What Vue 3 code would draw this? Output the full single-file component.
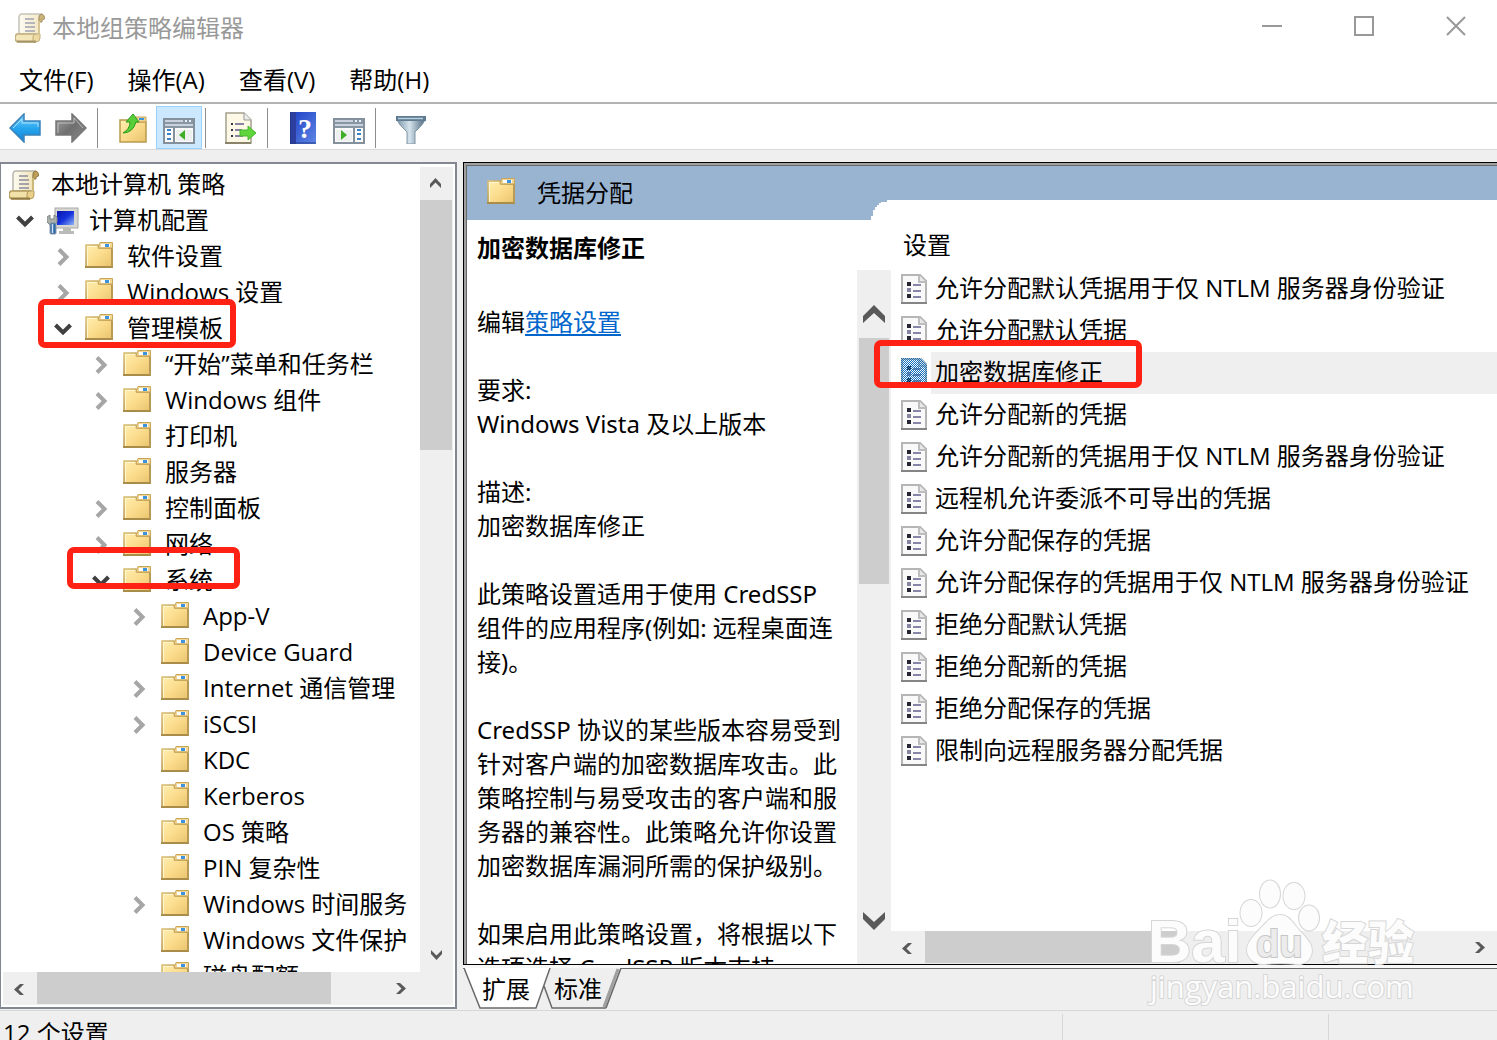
<template>
  <div class="window">
    <svg class="symbols" aria-hidden="true">
      <defs>
        <linearGradient id="gFolder" x1="0" y1="0" x2="1" y2="1">
          <stop offset="0" stop-color="#ffeeb0" />
          <stop offset="0.5" stop-color="#fbdc8c" />
          <stop offset="1" stop-color="#e8c26c" />
        </linearGradient>
        <linearGradient id="gFolderEdge" x1="0" y1="0" x2="1" y2="1">
          <stop offset="0" stop-color="#d9bd72" />
          <stop offset="1" stop-color="#8f7434" />
        </linearGradient>
        <linearGradient id="gPaper" x1="0" y1="0" x2="1" y2="0">
          <stop offset="0" stop-color="#fdfbf2" />
          <stop offset="1" stop-color="#f0e0ae" />
        </linearGradient>
        <linearGradient id="gBack" x1="0" y1="0" x2="0" y2="1">
          <stop offset="0" stop-color="#7fd0fa" />
          <stop offset="0.5" stop-color="#27a7f0" />
          <stop offset="1" stop-color="#1480cf" />
        </linearGradient>
        <linearGradient id="gForward" x1="0" y1="0" x2="1" y2="1">
          <stop offset="0" stop-color="#a5a5a5" />
          <stop offset="0.5" stop-color="#6f6f6f" />
          <stop offset="1" stop-color="#8c8c8c" />
        </linearGradient>
        <linearGradient id="gScreen" x1="0" y1="0" x2="1" y2="1">
          <stop offset="0" stop-color="#0a17a8" />
          <stop offset="0.5" stop-color="#1431dd" />
          <stop offset="1" stop-color="#8fb4f5" />
        </linearGradient>
        <linearGradient id="gHelp" x1="0" y1="0" x2="1" y2="1">
          <stop offset="0" stop-color="#1c3fc4" />
          <stop offset="1" stop-color="#5f86e6" />
        </linearGradient>
        <linearGradient id="gFunnel" x1="0" y1="0" x2="1" y2="0">
          <stop offset="0" stop-color="#7d97a8" />
          <stop offset="0.45" stop-color="#d5e3ec" />
          <stop offset="1" stop-color="#4e6b80" />
        </linearGradient>
        <pattern id="pDither" width="2" height="2" patternUnits="userSpaceOnUse">
          <rect width="1" height="1" fill="#1272c0" />
          <rect x="1" y="1" width="1" height="1" fill="#1272c0" />
        </pattern>
      </defs>

      <symbol id="folder" viewBox="0 0 28 26">
        <path d="M1 3h12l1 3h13v19.500H1z" fill="url(#gFolder)" stroke="url(#gFolderEdge)" stroke-width="1.500" />
        <path d="M2.500 24V4.500H12" fill="none" stroke="#fff6cf" />
        <path d="M13 6l2-5.500h12.500V6z" fill="#f0d796" stroke="#c9a55a" />
        <rect x="16" y="2" width="9" height="3" fill="#fff" />
        <rect x="20" y="2" width="4" height="3" fill="#3b93dd" />
        <path d="M0 25h28" stroke="#a98c4a" stroke-width="2" />
        <path d="M27 7v18" stroke="#b89a55" stroke-width="2" />
      </symbol>

      <symbol id="scroll" viewBox="0 0 30 30">
        <path d="M7 1q-3 0-3 4v16H24V5q0-4 3-4z" fill="url(#gPaper)" stroke="#b8b5a8" stroke-width="1.500" />
        <path d="M24 9V5q0-4 3-4 3 1 2.500 5L27 7v2z" fill="#bfa05a" stroke="#93793f" />
        <path d="M2 21h18v8H3q-3-1-3-4 0-3 2-4z" fill="#f1e0a8" stroke="#b39b5e" stroke-width="1.500" />
        <path d="M18 29V24q0-3 3-3h4v4q0 4-4 4z" fill="#e9d08a" stroke="#b39b5e" />
        <path d="M24 8v14" stroke="#cdb87c" stroke-width="2" />
        <path d="M2 28.500h19" stroke="#8f7a45" stroke-width="2" />
        <path d="M10 6h9M10 10h10M10 14h10M10 18h10" stroke="#8b8ca0" stroke-width="1.500" />
      </symbol>

      <symbol id="computer" viewBox="0 0 32 28">
        <rect x="8" y="1" width="23" height="20" fill="#d6d6d2" stroke="#a9a9a5" />
        <rect x="10" y="4" width="17" height="14" fill="url(#gScreen)" />
        <path d="M16 21h8v3h3v3H12v-3h4z" fill="#b9bbb8" />
        <path d="M0 10l3-2v4h4V8l3 2v5l-2 3H3l-3-3z" fill="#a9b0a8" stroke="#80858c" />
        <rect x="3" y="16" width="6" height="11" rx="1" fill="#2f6aa8" stroke="#8b99a8" />
        <path d="M5.500 17v9" stroke="#cfe3f5" stroke-width="1.500" />
      </symbol>

      <symbol id="policy" viewBox="0 0 26 30">
        <path d="M1 1h18l6 6v22H1z" fill="#f9f9f9" stroke="#b5b5b5" stroke-width="2" />
        <path d="M18 1v7h7" fill="#e8e8e8" stroke="#bdbdbd" stroke-width="2" />
        <path d="M0 29h26" stroke="#858585" stroke-width="2" />
        <path d="M6 8h4v4H6zM6 20h4v4H6z" fill="#262633" />
        <path d="M6 14h4v4H6z" fill="#8686a3" />
        <path d="M12 11h8M12 17h8M12 23h8" stroke="#8886a6" stroke-width="2" />
      </symbol>

      <symbol id="back" viewBox="0 0 32 30">
        <path d="M1 15L15 1v7h16v14H15v7z" fill="url(#gBack)" stroke="#3c82b8" stroke-width="1.500" />
        <path d="M4 15l9-9v4h16v4" fill="none" stroke="#a9e2ff" />
      </symbol>
      <symbol id="forward" viewBox="0 0 32 30">
        <path d="M31 15L17 1v7H1v14h16v7z" fill="url(#gForward)" stroke="#777" stroke-width="1.500" />
        <path d="M28 15l-9-10v5H3v10" fill="none" stroke="#bdbdbd" />
      </symbol>

      <symbol id="up" viewBox="0 0 28 30">
        <path d="M1 7h12l1 2h13v20H1z" fill="url(#gFolder)" stroke="#b9994e" stroke-width="1.500" />
        <path d="M14 9l2-5h11v5z" fill="#eed38f" stroke="#c9a55a" />
        <rect x="20" y="5" width="5" height="2" fill="#3b93dd" />
        <path d="M14 1l-7 8h4q0 7-7 11 10 0 13-11h3z" fill="#58cf39" stroke="#2d9c1e" />
      </symbol>

      <symbol id="console" viewBox="0 0 32 26">
        <rect x="1" y="1" width="30" height="24" fill="#fafafa" stroke="#84909c" stroke-width="2" />
        <path d="M2 2h28v8H2z" fill="#8997a5" />
        <path d="M2 3h18M2 7h28" stroke="#e0e8ef" stroke-width="1.500" />
        <path d="M22 3h2M26 3h2" stroke="#eaf2fa" stroke-width="2" />
        <path d="M11 10v15" stroke="#84909c" stroke-width="2" />
        <path d="M4 12h4M4 16h4M4 21h4" stroke="#3e82c4" stroke-width="2" />
        <rect x="13" y="12" width="16" height="11" fill="#eef0ef" />
        <path d="M22 12v10l-6-5z" fill="#3fae27" />
      </symbol>
      <symbol id="actions" viewBox="0 0 32 26">
        <rect x="1" y="1" width="30" height="24" fill="#fafafa" stroke="#84909c" stroke-width="2" />
        <path d="M2 2h28v8H2z" fill="#8997a5" />
        <path d="M2 3h18M2 7h28" stroke="#e0e8ef" stroke-width="1.500" />
        <path d="M22 3h2M26 3h2" stroke="#eaf2fa" stroke-width="2" />
        <path d="M21 10v15" stroke="#84909c" stroke-width="2" />
        <path d="M24 12h4M24 16h4M24 21h4" stroke="#3e82c4" stroke-width="2" />
        <rect x="3" y="12" width="16" height="11" fill="#eef0ef" />
        <path d="M8 12v10l6-5z" fill="#3fae27" />
      </symbol>

      <symbol id="export" viewBox="0 0 32 32">
        <path d="M1 1h18l7 7v23H1z" fill="#fdf9e6" stroke="#a3a08f" stroke-width="1.500" />
        <path d="M19 1v7h7" fill="#eee" stroke="#999" />
        <path d="M0 31h26" stroke="#8a836a" stroke-width="2" />
        <path d="M6 12h2M6 18h2M6 24h2" stroke="#33334a" stroke-width="2" />
        <path d="M10 12h9M10 18h7M10 24h8" stroke="#8684a2" stroke-width="2" />
        <path d="M15 18h8v-4l8 7-8 7v-4h-8z" fill="#5fd63b" stroke="#48b530" />
      </symbol>

      <symbol id="help" viewBox="0 0 26 32">
        <rect width="26" height="32" fill="url(#gHelp)" />
        <rect width="6" height="32" fill="#2c3f9f" />
        <path d="M.5 0v32M0 31h26" stroke="#243a86" />
        <text x="8" y="26" class="mark">?</text>
      </symbol>

      <symbol id="filter" viewBox="0 0 30 28">
        <path d="M1 4q2 5 10 12v12h8V16q8-7 10-12z" fill="url(#gFunnel)" stroke="#8297a5" />
        <path d="M0 0h30v5H0z" fill="#5f7b90" />
        <path d="M2 2.500h25" stroke="#b5cfe0" stroke-width="1.500" />
      </symbol>

      <symbol id="chevron" viewBox="0 0 20 20">
        <path d="M6 2.500l7.500 7.500L6 17.500" fill="none" stroke="currentColor" stroke-width="4" />
      </symbol>
      <symbol id="arrow" viewBox="0 0 20 20">
        <path d="M5 4h4l6 5.500L9 15H5l5.500-5.500z" fill="currentColor" />
      </symbol>
      <symbol id="arrowBig" viewBox="0 0 22 18">
        <path d="M0 11L11 0l11 11v7L11 8 0 18z" fill="currentColor" />
      </symbol>
    </svg>

    <header class="titlebar">
      <svg class="app-icon"><use href="#scroll" /></svg>
      <h1>本地组策略编辑器</h1>
      <div class="controls">
        <button aria-label="最小化"><svg viewBox="0 0 20 20"><path d="M0 10h20" /></svg></button>
        <button aria-label="最大化"><svg viewBox="0 0 20 20"><path d="M1 1h18v18H1z" /></svg></button>
        <button aria-label="关闭"><svg viewBox="0 0 20 20"><path d="M1 1l18 18M19 1L1 19" /></svg></button>
      </div>
    </header>

    <nav class="menubar">
      <button v-for="item in menus" :key="item">{{ item }}</button>
    </nav>

    <div class="toolbar">
      <template v-for="(tool, i) in tools" :key="i">
        <span v-if="tool.sep" class="sep"></span>
        <button v-else :class="{ active: tool.active }" :aria-label="tool.label">
          <svg :class="'t-' + tool.icon"><use :href="'#' + tool.icon" /></svg>
        </button>
      </template>
    </div>

    <main class="panes">
      <section class="tree-pane">
        <div class="tree-body">
          <ul class="tree">
            <li v-for="node in nodes" :key="node.text" :style="{ paddingLeft: indent(node) + 'px' }">
              <span v-if="node.level > 0" class="slot">
                <button
                  v-if="node.state"
                  class="toggle"
                  :class="{ open: node.state === 'open' }"
                  :aria-label="node.text"
                >
                  <svg><use href="#chevron" /></svg>
                </button>
              </span>
              <span class="node-icon">
                <svg :class="'n-' + (node.icon || 'folder')"><use :href="'#' + (node.icon || 'folder')" /></svg>
              </span>
              <span class="node-text">{{ node.text }}</span>
            </li>
          </ul>
          <div class="vbar">
            <button aria-label="向上"><svg class="up"><use href="#arrow" /></svg></button>
            <div class="thumb"></div>
            <button class="end" aria-label="向下"><svg class="down"><use href="#arrow" /></svg></button>
          </div>
        </div>
        <div class="hbar">
          <button aria-label="向左"><svg class="left"><use href="#arrow" /></svg></button>
          <div class="thumb"></div>
          <button class="end" aria-label="向右"><svg><use href="#arrow" /></svg></button>
        </div>
        <div class="marker marker-templates"></div>
        <div class="marker marker-system"></div>
      </section>

      <section class="result-pane">
        <div class="result-frame">
          <div class="banner">
            <svg class="n-folder"><use href="#folder" /></svg>
            <h2>凭据分配</h2>
          </div>
          <div class="columns">
            <article class="detail">
              <h3>加密数据库修正</h3>
              <p class="edit">编辑<a href="#">策略设置</a></p>
              <p v-for="(para, i) in paragraphs" :key="i">
                <span v-for="line in para" :key="line">{{ line }}</span>
              </p>
            </article>
            <div class="bigbar">
              <button aria-label="向上"><svg><use href="#arrowBig" /></svg></button>
              <div class="thumb"></div>
              <button class="end" aria-label="向下"><svg class="flip"><use href="#arrowBig" /></svg></button>
            </div>
            <div class="list">
              <svg class="corner" viewBox="0 0 20 20"><path d="M0 20V16H2V10H4V7H6V5H8V3H10V2H16V0H20V20z" /></svg>
              <h3>设置</h3>
              <ul>
                <li v-for="s in settings" :key="s" :class="{ selected: s === current }">
                  <svg class="doc" viewBox="0 0 26 30">
                    <use href="#policy" />
                    <path v-if="s === current" d="M0 0h20l6 6v24H0z" fill="url(#pDither)" />
                  </svg>
                  <span>{{ s }}</span>
                </li>
              </ul>
              <div class="hbar list-hbar">
                <button aria-label="向左"><svg class="left"><use href="#arrow" /></svg></button>
                <div class="thumb"></div>
                <button class="end" aria-label="向右"><svg><use href="#arrow" /></svg></button>
              </div>
              <div class="marker marker-setting"></div>
            </div>
          </div>
        </div>
        <div class="tabs">
          <svg viewBox="0 0 160 44">
            <path d="M80 18l8 22h54l15-40H86z" fill="#efefef" />
            <path d="M80 18l8 22h54" fill="none" stroke="#696969" stroke-width="1.500" />
            <path d="M154 1l-14 38" fill="none" stroke="#a0a0a0" stroke-width="3" />
            <path d="M157 0l-15 40" fill="none" stroke="#696969" stroke-width="1.500" />
            <path d="M0 0l16 40h56L86 0z" fill="#fff" />
            <path d="M0 0l16 40h56L86 0" fill="none" stroke="#696969" stroke-width="1.500" />
          </svg>
          <button>扩展</button>
          <button>标准</button>
        </div>
      </section>
    </main>

    <footer class="status">
      <div class="status-text">12 个设置</div>
      <div class="cell wide"></div>
      <div class="cell"></div>
    </footer>

    <svg class="watermark" viewBox="0 0 280 130">
      <g class="wm-shape">
        <ellipse cx="101" cy="33" rx="10.500" ry="13" />
        <ellipse cx="120" cy="14" rx="10" ry="13.500" />
        <ellipse cx="144" cy="16" rx="10.500" ry="13" />
        <ellipse cx="159" cy="38" rx="10" ry="12.500" />
        <path d="M130 35c9 0 13 8 19 15 7 8 13 13 13 21-1 9-7 14-16 13-7-1-23-1-31 0-10 1-17-5-18-13 0-9 6-14 12-21 7-7 12-15 21-15z" />
      </g>
      <text x="-2" y="82" class="wm-bai">Bai</text>
      <text x="106" y="77" class="wm-du">du</text>
      <text x="172" y="79" class="wm-cn">经验</text>
      <text x="0" y="118" class="wm-url">jingyan.baidu.com</text>
    </svg>
  </div>
</template>

<script setup>
import { ref } from 'vue';

const menus = ['文件(F)', '操作(A)', '查看(V)', '帮助(H)'];

const tools = [
  { icon: 'back', label: '后退' },
  { icon: 'forward', label: '前进' },
  { sep: true },
  { icon: 'up', label: '上移一级' },
  { icon: 'console', label: '显示/隐藏控制台树', active: true },
  { sep: true },
  { icon: 'export', label: '导出列表' },
  { sep: true },
  { icon: 'help', label: '帮助' },
  { icon: 'actions', label: '显示/隐藏操作窗格' },
  { sep: true },
  { icon: 'filter', label: '筛选器' }
];

const nodes = [
  { text: '本地计算机 策略', level: 0, icon: 'scroll' },
  { text: '计算机配置', level: 1, icon: 'computer', state: 'open' },
  { text: '软件设置', level: 2, state: 'closed' },
  { text: 'Windows 设置', level: 2, state: 'closed' },
  { text: '管理模板', level: 2, state: 'open' },
  { text: '“开始”菜单和任务栏', level: 3, state: 'closed' },
  { text: 'Windows 组件', level: 3, state: 'closed' },
  { text: '打印机', level: 3 },
  { text: '服务器', level: 3 },
  { text: '控制面板', level: 3, state: 'closed' },
  { text: '网络', level: 3, state: 'closed' },
  { text: '系统', level: 3, state: 'open' },
  { text: 'App-V', level: 4, state: 'closed' },
  { text: 'Device Guard', level: 4 },
  { text: 'Internet 通信管理', level: 4, state: 'closed' },
  { text: 'iSCSI', level: 4, state: 'closed' },
  { text: 'KDC', level: 4 },
  { text: 'Kerberos', level: 4 },
  { text: 'OS 策略', level: 4 },
  { text: 'PIN 复杂性', level: 4 },
  { text: 'Windows 时间服务', level: 4, state: 'closed' },
  { text: 'Windows 文件保护', level: 4 },
  { text: '磁盘配额', level: 4 }
];

const indent = (node) => 5 + Math.max(node.level - 1, 0) * 38;

const paragraphs = [
  ['要求:', 'Windows Vista 及以上版本'],
  ['描述:', '加密数据库修正'],
  ['此策略设置适用于使用 CredSSP', '组件的应用程序(例如: 远程桌面连', '接)。'],
  [
    'CredSSP 协议的某些版本容易受到',
    '针对客户端的加密数据库攻击。此',
    '策略控制与易受攻击的客户端和服',
    '务器的兼容性。此策略允许你设置',
    '加密数据库漏洞所需的保护级别。'
  ],
  ['如果启用此策略设置，将根据以下', '选项选择 CredSSP 版本支持:']
];

const settings = [
  '允许分配默认凭据用于仅 NTLM 服务器身份验证',
  '允许分配默认凭据',
  '加密数据库修正',
  '允许分配新的凭据',
  '允许分配新的凭据用于仅 NTLM 服务器身份验证',
  '远程机允许委派不可导出的凭据',
  '允许分配保存的凭据',
  '允许分配保存的凭据用于仅 NTLM 服务器身份验证',
  '拒绝分配默认凭据',
  '拒绝分配新的凭据',
  '拒绝分配保存的凭据',
  '限制向远程服务器分配凭据'
];

const current = ref('加密数据库修正');
</script>

<style>
body {
  overflow: hidden;
}
</style>

<style scoped>
.window {
  position: relative;
  display: flex;
  flex-direction: column;
  height: 100vh;
  overflow: hidden;
  background: #efefef;
  color: #000;
  font-family: "Open Sans", "Noto Sans CJK SC", sans-serif;
  font-size: 24px;
  line-height: 36px;
  white-space: nowrap;
}

.symbols {
  position: absolute;
  width: 0;
  height: 0;
}

.mark {
  font: bold 28px "Liberation Serif", serif;
  fill: #fff;
}

h1,
h2,
h3,
p,
ul {
  margin: 0;
  padding: 0;
  font-size: 24px;
  font-weight: normal;
  list-style: none;
}

button {
  display: flex;
  align-items: center;
  justify-content: center;
  box-sizing: border-box;
  margin: 0;
  padding: 0;
  border: 0;
  background: none;
  color: inherit;
  font: inherit;
}

svg {
  flex: none;
}

/* title, menu, toolbar */
.titlebar {
  display: flex;
  flex: none;
  align-items: center;
  height: 56px;
  padding-left: 15px;
  background: #fff;
}

.app-icon {
  width: 30px;
  height: 30px;
  opacity: 0.8;
}

.titlebar h1 {
  margin-left: 7px;
  color: #999;
}

.controls {
  display: flex;
  margin-left: auto;
  margin-right: -5px;
}

.controls button {
  width: 92px;
  height: 56px;
  padding-bottom: 4px;
}

.controls svg {
  width: 20px;
  height: 20px;
  overflow: visible;
  fill: none;
  stroke: #999;
  stroke-width: 2;
}

.menubar {
  display: flex;
  flex: none;
  height: 46px;
  padding-left: 2px;
  border-bottom: 2px solid #b2b2b2;
  background: #fff;
}

.menubar button {
  height: 48px;
  padding: 0 17px;
}

.toolbar {
  display: flex;
  flex: none;
  align-items: center;
  height: 45px;
  padding-left: 2px;
  border-bottom: 1px solid #d9d9d9;
  background: #fff;
}

.toolbar button {
  width: 46px;
  height: 43px;
  margin-top: 2px;
}

.toolbar button.active {
  border: 1px solid #99d1ff;
  background: #cce8ff;
}

.sep {
  width: 1px;
  height: 40px;
  margin: 3px 12px 0 3px;
  background: #8d8d8d;
}

.t-back,
.t-forward {
  width: 32px;
  height: 30px;
}

.t-up {
  width: 28px;
  height: 30px;
}

.t-console,
.t-actions {
  width: 32px;
  height: 26px;
  margin-top: 6px;
}

.t-export {
  width: 32px;
  height: 32px;
}

.t-help {
  width: 26px;
  height: 32px;
}

.t-filter {
  width: 30px;
  height: 28px;
  margin-top: 4px;
}

/* panes */
.panes {
  display: grid;
  flex: 1;
  grid-template-columns: 457px minmax(0, 1fr);
  gap: 6px;
  min-height: 0;
  padding-top: 12px;
}

.tree-pane {
  position: relative;
  display: flex;
  flex-direction: column;
  box-sizing: border-box;
  min-height: 0;
  padding: 3px 2px 2px 0;
  border: 2px solid #828790;
  border-left-width: 1px;
  background: #fff;
}

.tree-body {
  display: flex;
  flex: 1;
  min-height: 0;
}

.tree {
  flex: 1;
  overflow: hidden;
}

.tree li {
  display: flex;
  height: 36px;
}

.node-text {
  line-height: 34px;
}

.slot {
  display: flex;
  flex: none;
  align-items: center;
  justify-content: center;
  width: 38px;
}

.toggle {
  color: #a6a6a6;
}

.toggle svg {
  width: 20px;
  height: 20px;
}

.toggle.open {
  color: #404040;
}

.toggle.open svg {
  transform: rotate(90deg);
}

.node-icon {
  display: flex;
  flex: none;
  align-items: center;
  width: 42px;
  padding-left: 3px;
}

.n-folder {
  width: 28px;
  height: 26px;
  margin-bottom: 4px;
}

.n-scroll {
  width: 30px;
  height: 30px;
}

.n-computer {
  width: 32px;
  height: 28px;
}

/* scroll bars */
.vbar {
  display: flex;
  flex: none;
  flex-direction: column;
  width: 33px;
  background: #efefef;
}

.vbar button,
.hbar button {
  flex: none;
  width: 33px;
  height: 33px;
  color: #595959;
}

.vbar button {
  padding: 0 2px 2px 0;
}

.hbar button {
  padding: 0 2px 0 0;
}

.vbar svg,
.hbar svg {
  width: 20px;
  height: 20px;
}

.vbar .thumb {
  height: 31%;
  margin-right: 1px;
  background: #cdcdcd;
}

.vbar .end,
.bigbar .end {
  margin-top: auto;
}

.up {
  transform: rotate(-90deg);
}

.down {
  transform: rotate(90deg);
}

.left,
.flip {
  transform: rotate(180deg);
}

.hbar {
  display: flex;
  flex: none;
  height: 33px;
  margin-left: 2px;
  background: #efefef;
}

.hbar .thumb {
  width: 294px;
  height: 32px;
  margin-left: 1px;
  background: #cdcdcd;
}

.hbar .end {
  margin-left: auto;
}

.tree-pane .hbar .end {
  margin-right: 35px;
}

/* result pane */
.result-pane {
  display: flex;
  flex-direction: column;
  min-width: 0;
  min-height: 0;
}

.result-frame {
  display: flex;
  flex: 1;
  flex-direction: column;
  min-height: 0;
  border-top: 1px solid #000;
  border-bottom: 1px solid #000;
  border-left: 1px solid #000;
  background: #fff;
  box-shadow: inset 2px 2px #a0a0a0, inset 3px 3px #696969;
  padding: 3px 0 0 3px;
}

.banner {
  display: flex;
  flex: none;
  align-items: center;
  height: 54px;
  padding-left: 20px;
  background: #99b4d1;
}

.banner h2 {
  margin-left: 22px;
  line-height: 38px;
}

.columns {
  display: flex;
  flex: 1;
  min-height: 0;
}

.detail {
  flex: none;
  width: 380px;
  padding-left: 10px;
  overflow: hidden;
  font-family: "Noto Sans", "Noto Sans CJK SC", sans-serif;
  line-height: 34px;
}

.detail h3 {
  margin: 11px 0 40px;
  font-weight: bold;
}

.detail p {
  margin-bottom: 34px;
}

.detail p span {
  display: block;
}

.detail a {
  color: #0066cc;
  text-decoration-thickness: 2px;
  text-underline-offset: 3px;
}

.bigbar {
  display: flex;
  flex: none;
  flex-direction: column;
  width: 34px;
  margin-top: 50px;
  background: #efefef;
  color: #595959;
}

.bigbar svg {
  width: 22px;
  height: 18px;
}

.bigbar button {
  height: 68px;
  padding-top: 19px;
}

.bigbar .end {
  padding-top: 0;
  padding-bottom: 18px;
}

.bigbar .thumb {
  height: 246px;
  margin: 0 2px;
  background: #cdcdcd;
}

.list {
  position: relative;
  display: flex;
  flex: 1;
  flex-direction: column;
  min-width: 0;
  margin-top: -20px;
  background: #fff;
}

.corner {
  position: absolute;
  top: 0;
  left: -20px;
  width: 20px;
  height: 20px;
  fill: #fff;
}

.list h3 {
  padding: 27px 0 5px 12px;
}

.list ul {
  flex: 1;
  overflow: hidden;
}

.list li {
  display: flex;
  align-items: center;
  height: 42px;
  padding-left: 10px;
}

.list li span {
  flex: 1;
  height: 42px;
  margin-left: 4px;
  padding-left: 4px;
  line-height: 40px;
}

.list li.selected span {
  background: #efefef;
}

.doc {
  width: 26px;
  height: 30px;
}

.list-hbar {
  margin: 0;
}

.list-hbar .thumb {
  width: 42%;
}

/* sheet tabs */
.tabs {
  position: relative;
  display: flex;
  flex: none;
  gap: 24px;
  height: 40px;
  margin-top: 3px;
  padding-left: 19px;
  border-top: 1px solid #696969;
  box-shadow: 0 -3px #f8f8f8;
}

.tabs svg {
  position: absolute;
  top: -1px;
  left: 1px;
  width: 160px;
  height: 44px;
}

.tabs button {
  position: relative;
}

.status {
  display: flex;
  flex: none;
  height: 29px;
  margin-top: 1px;
  border-top: 1px solid #d7d7d7;
}

.status-text {
  flex: 1;
  padding-left: 3px;
  line-height: 44px;
}

.cell {
  width: 168px;
  margin-top: 3px;
  border-left: 1px solid #d7d7d7;
}

.cell.wide {
  width: 265px;
}

/* highlights and watermark lie over the content */
.marker {
  position: absolute;
  box-sizing: border-box;
  border: 6px solid #ff2214;
  border-radius: 7px;
}

.marker-templates {
  top: 135px;
  left: 37px;
  width: 198px;
  height: 49px;
}

.marker-system {
  top: 383px;
  left: 66px;
  width: 173px;
  height: 42px;
}

.marker-setting {
  top: 140px;
  left: -17px;
  width: 268px;
  height: 48px;
}

.watermark {
  position: absolute;
  right: 67px;
  bottom: 30px;
  width: 280px;
  height: 130px;
  overflow: visible;
}

.watermark text,
.wm-shape {
  fill: #fcfcfc;
  stroke: #d6d6d6;
  stroke-width: 2;
  paint-order: stroke;
}

.watermark .wm-bai {
  font: bold 60px "Liberation Sans", sans-serif;
}

.watermark .wm-du {
  font: bold 38px "Liberation Sans", sans-serif;
  fill: #ececec;
  stroke: #c6c6c6;
}

.watermark .wm-cn {
  font: 900 46px "Noto Sans CJK SC", sans-serif;
}

.watermark .wm-url {
  font: 31px "Open Sans", sans-serif;
}
</style>
